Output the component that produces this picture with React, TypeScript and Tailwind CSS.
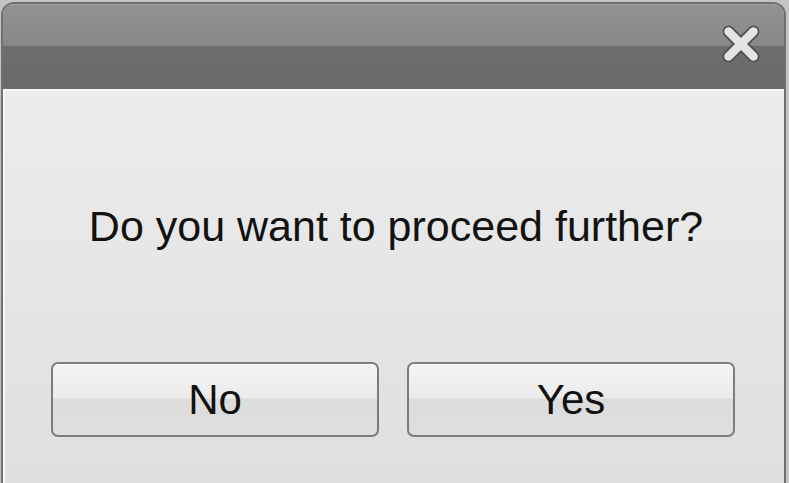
export default function App() {
  return (
    <div className="w-[789px] h-[483px] overflow-hidden bg-[#c4c4c4] pl-[1px] pr-[3px] pt-[2px] font-['Liberation_Sans',Arial,sans-serif]">
      <div className="h-[520px] rounded-t-[13px] border-2 border-b-0 border-[#707070] overflow-hidden flex flex-col">
        {/* title bar */}
        <div className="h-[85px] shrink-0 flex items-center justify-end pr-[21px] bg-[linear-gradient(to_bottom,#929292_0%,#888888_48%,#6e6e6e_49%,#696969_100%)] border-t border-[#a0a0a0]">
          <svg width="44" height="44" viewBox="0 0 44 44" className="mb-[7px]">
            <path d="M9.5 9.5 L34.5 34.5 M34.5 9.5 L9.5 34.5" stroke="#4f4f4f" strokeWidth="12" strokeLinecap="round" />
            <path d="M9.5 9.5 L34.5 34.5 M34.5 9.5 L9.5 34.5" stroke="#e4e4e4" strokeWidth="8.5" strokeLinecap="round" />
          </svg>
        </div>
        {/* body */}
        <div className="flex-1 border-t-2 border-l-2 border-[#f7f7f7] bg-[linear-gradient(to_bottom,#ececec,#dedede)] flex flex-col items-center">
          <p className="mt-[110px] pl-[3px] text-[43px] leading-[50px] text-[#121212]">
            Do you want to proceed further?
          </p>
          <div className="mt-[111px] flex gap-[28px] pr-[3px]">
            {["No", "Yes"].map((label) => (
              <button
                key={label}
                className="w-[328px] h-[75px] rounded-[7px] border-2 border-[#7c7c7c] bg-[linear-gradient(to_bottom,#f4f4f4_0%,#ebebeb_48%,#dcdcdc_49%,#dfdfdf_100%)] shadow-[inset_0_1px_0_#ffffff] text-[42px] leading-none text-[#111]"
              >
                {label}
              </button>
            ))}
          </div>
        </div>
      </div>
    </div>
  );
}
